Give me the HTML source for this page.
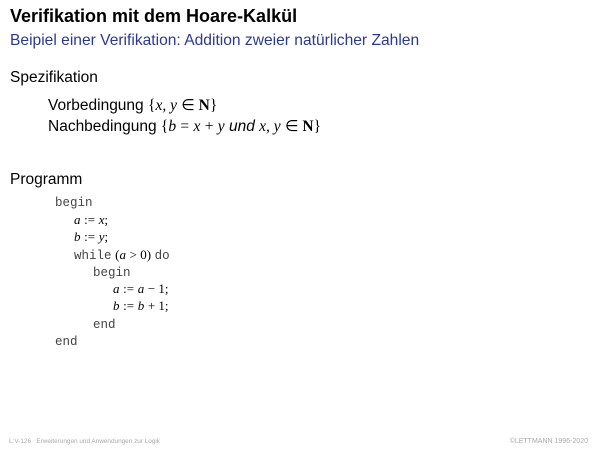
<!DOCTYPE html>
<html><head><meta charset="utf-8"><style>
body{margin:0;width:600px;height:450px;background:#fff;position:relative;font-family:"Liberation Sans",sans-serif;color:#000;overflow:hidden}
div{position:absolute;white-space:nowrap}
.m{font-family:"Liberation Serif",serif;font-style:italic}
.r{font-family:"Liberation Serif",serif}
.c{font-family:"Liberation Mono",monospace;font-size:12.5px;color:#444}
.cl{font-size:13px;line-height:17px}
</style></head><body>
<div style="left:10px;top:6px;font-size:18px;font-weight:bold">Verifikation mit dem Hoare-Kalkül</div>
<div style="left:10px;top:32px;font-size:15.6px;color:#2b3990">Beipiel einer Verifikation: Addition zweier natürlicher Zahlen</div>
<div style="left:10px;top:69px;font-size:15.5px">Spezifikation</div>
<div style="left:48px;top:96px;font-size:15.5px">Vorbedingung <span class="r">{</span><span class="m">x, y</span> <span class="r">∈ <b>N</b>}</span></div>
<div style="left:48px;top:117px;font-size:15.5px">Nachbedingung <span class="r">{</span><span class="m">b</span> <span class="r">=</span> <span class="m">x</span> <span class="r">+</span> <span class="m">y</span> <i>und</i> <span class="m">x, y</span> <span class="r">∈ <b>N</b>}</span></div>
<div style="left:10px;top:171px;font-size:15.5px">Programm</div>
<div class="cl" style="left:55px;top:193px"><span class="c">begin</span></div>
<div class="cl" style="left:74px;top:211px"><span class="m">a</span> <span class="r">:=</span> <span class="m">x</span><span class="r">;</span></div>
<div class="cl" style="left:74px;top:228px"><span class="m">b</span> <span class="r">:=</span> <span class="m">y</span><span class="r">;</span></div>
<div class="cl" style="left:74px;top:246px"><span class="c">while</span> <span class="r">(</span><span class="m">a</span> <span class="r">&gt; 0)</span> <span class="c">do</span></div>
<div class="cl" style="left:93px;top:263px"><span class="c">begin</span></div>
<div class="cl" style="left:113px;top:280px"><span class="m">a</span> <span class="r">:=</span> <span class="m">a</span> <span class="r">− 1;</span></div>
<div class="cl" style="left:113px;top:297px"><span class="m">b</span> <span class="r">:=</span> <span class="m">b</span> <span class="r">+ 1;</span></div>
<div class="cl" style="left:93px;top:315px"><span class="c">end</span></div>
<div class="cl" style="left:55px;top:332px"><span class="c">end</span></div>
<div style="left:9px;top:438px;font-size:6.4px;color:#aaa">L:V-126 &nbsp; Erweiterungen und Anwendungen zur Logik</div>
<div style="right:12px;top:438px;font-size:7px;color:#aaa">©LETTMANN 1996-2020</div>
</body></html>
